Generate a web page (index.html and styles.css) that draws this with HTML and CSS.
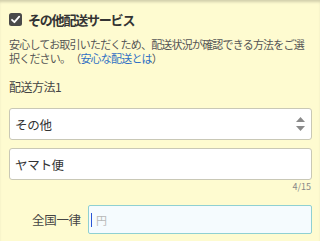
FILE: index.html
```html
<!DOCTYPE html>
<html lang="ja">
<head>
    <meta charset="UTF-8">
    <meta name="viewport" content="width=device-width, initial-scale=1.0">
    <title>その他配送サービス</title>
    <link rel="stylesheet" href="styles.css">
</head>
<body>

<div class="panel">
    <div class="title-row">
        <span class="checkbox">
            <svg width="13" height="13" viewBox="0 0 13 13">
                <rect x="0" y="0" width="13" height="13" rx="2.5" fill="#4a4a4a"/>
                <path d="M3 6.8 L5.4 9.2 L10.2 3.6" fill="none" stroke="#fff" stroke-width="1.8" stroke-linecap="round" stroke-linejoin="round"/>
            </svg>
        </span>
        <h1>その他配送サービス</h1>
    </div>
    <p class="note">安心してお取引いただくため、配送状況が確認できる方法をご選択ください。（<a href="#">安心な配送とは</a>）</p>

    <div class="field-label">配送方法1</div>
    <div class="select">
        <span>その他</span>
        <svg class="arrows" width="11" height="16" viewBox="0 0 11 16">
            <path d="M1 6 L5.5 1 L10 6 Z" fill="#8a8a8a"/>
            <path d="M1 10 L5.5 15 L10 10 Z" fill="#8a8a8a"/>
        </svg>
    </div>
    <div class="text-input">ヤマト便</div>
    <div class="counter">4/15</div>

    <div class="price-row">
        <span class="price-label">全国一律</span>
        <div class="price-input"><span class="caret"></span><span class="placeholder">円</span></div>
    </div>
</div>

</body>
</html>
```

FILE: styles.css
```css
body {
    margin: 0;
    font-family: "Noto Sans CJK JP", "Noto Sans", sans-serif;
    text-spacing-trim: space-all;
    background: #fefbd0;
}
.panel {
    height: 241px;
    padding: 12px 8px 0 9px;
    box-sizing: border-box;
    box-shadow: inset 0 3px 3px -1px rgba(0, 0, 0, 0.18);
    overflow: hidden;
}
.title-row {
    display: flex;
    align-items: center;
    height: 15px;
}
.checkbox {
    display: flex;
    margin-right: 6px;
}
h1 {
    margin: 0;
    font-size: 13px;
    font-weight: bold;
    letter-spacing: -1.2px;
    color: #333;
}
.note {
    margin: 10px 0 0;
    font-size: 11px;
    letter-spacing: -0.8px;
    line-height: 14px;
    color: #555;
}
.note a {
    color: #2f6fc4;
    text-decoration: none;
}
.field-label {
    margin-top: 15px;
    font-size: 12px;
    letter-spacing: -0.5px;
    line-height: 14px;
    color: #444;
}
.select, .text-input {
    height: 32px;
    box-sizing: border-box;
    background: #fff;
    border: 1px solid #c9c8b6;
    border-radius: 3px;
    padding: 0 5px;
    display: flex;
    align-items: center;
    font-size: 12.5px;
    letter-spacing: -0.3px;
    color: #333;
}
.select {
    margin-top: 14px;
    justify-content: space-between;
}
.text-input {
    margin-top: 8px;
}
.counter {
    text-align: right;
    font-size: 9px;
    line-height: 14px;
    color: #888;
    padding-right: 1px;
}
.price-row {
    display: flex;
    align-items: center;
    margin-top: 11px;
}
.price-label {
    width: 79px;
    padding-left: 23px;
    box-sizing: border-box;
    font-size: 12.5px;
    letter-spacing: -0.3px;
    color: #444;
}
.price-input {
    flex: 1;
    height: 29px;
    box-sizing: border-box;
    background: #f5fbfe;
    border: 1px solid #8fd0d2;
    border-radius: 2px;
    display: flex;
    align-items: center;
    padding-left: 2px;
}
.caret {
    width: 1px;
    height: 14px;
    background: #2a55d6;
    margin-right: 4px;
}
.placeholder {
    font-size: 11px;
    color: #b8b8b8;
}
```
